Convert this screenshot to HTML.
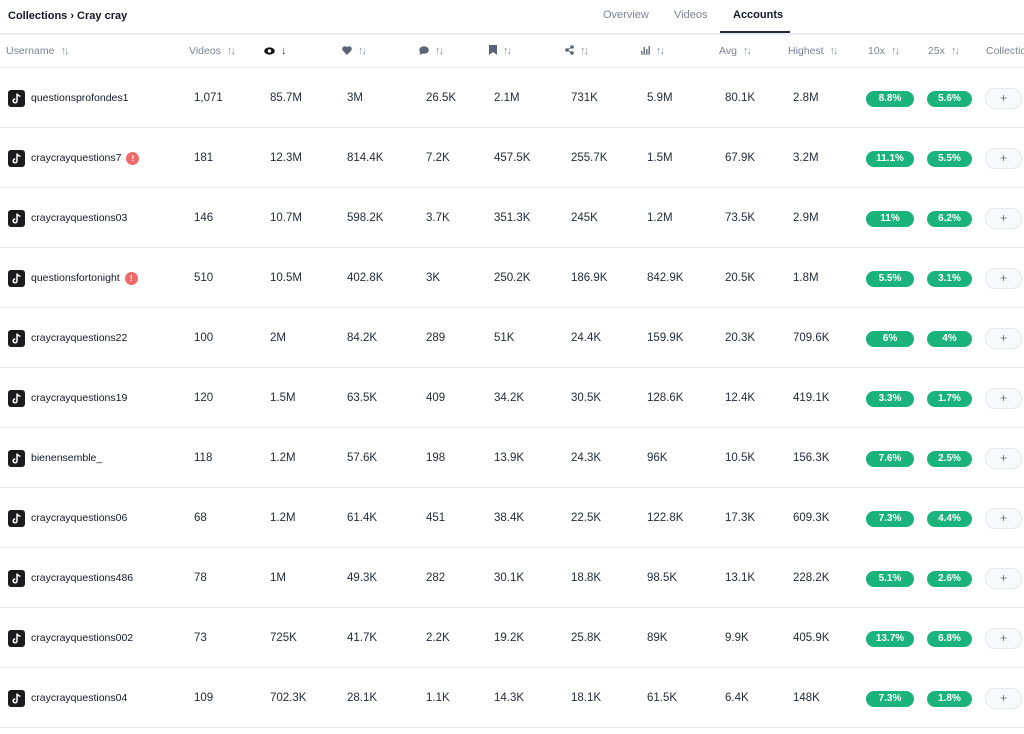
<!DOCTYPE html>
<html><head><meta charset="utf-8"><style>
*{margin:0;padding:0;box-sizing:border-box}
body{width:1024px;height:734px;overflow:hidden;background:#fff;font-family:"Liberation Sans",sans-serif;color:#1f2937;position:relative}
.top{position:absolute;left:0;top:0;width:1024px;height:35px;border-bottom:2px solid #e8edf3}
.bc{position:absolute;left:8px;top:10px;font-size:11px;font-weight:bold;color:#111827}
.tab{position:absolute;top:9px;font-size:11px;color:#7b8494}
.tab.a{color:#111827;font-weight:bold}
.ul{position:absolute;left:720px;top:31px;width:70px;height:2px;background:#1f2937}
.hdr{position:absolute;left:0;top:35px;width:1024px;height:33px;border-bottom:1px solid #e5e7eb}
.h{position:absolute;top:10px;font-size:10.5px;color:#7b8494;white-space:nowrap}
.s{font-size:11px;color:#8a94a4;margin-left:6px;letter-spacing:-2px}
.row{position:absolute;left:0;width:1024px;height:60px;border-bottom:1px solid #e5e7eb}
.c{position:absolute;top:1px;line-height:59px;font-size:11.5px;color:#1f2937;white-space:nowrap}
.u{left:8px;display:flex;align-items:center;height:59px;font-size:10.5px;color:#111827}
.tt{width:17px;height:17px;background:#1c1c1e;border-radius:3px;margin-right:6px;display:flex;align-items:center;justify-content:center}
.bang{display:inline-block;width:13px;height:13px;border-radius:50%;background:#ef6b6b;color:#fff;font-size:8px;text-align:center;line-height:13px;margin-left:5px;font-weight:bold}
.p{position:absolute;top:23px;height:16px;border-radius:8px;background:#19b37b;color:#fff;font-size:10px;text-align:center;line-height:16px;font-weight:bold}
.p1{left:866px;width:48px}.p2{left:927px;width:45px}
.pl{position:absolute;left:985px;top:20px;width:37px;height:21px;border:1px solid #e5e7eb;border-radius:10px;background:#f8fafc;color:#6b7280;font-size:12px;text-align:center;line-height:19px}
.v1{left:194px}.v2{left:270px}.v3{left:347px}.v4{left:426px}.v5{left:494px}.v6{left:571px}.v7{left:647px}.v8{left:725px}.v9{left:793px}
</style></head><body>
<div class="top">
<div class="bc">Collections › Cray cray</div>
<div class="tab" style="left:603px">Overview</div>
<div class="tab" style="left:674px">Videos</div>
<div class="tab a" style="left:733px">Accounts</div>
<div class="ul"></div>
</div>
<div class="hdr">
<div class="h" style="left:6px">Username<span class="s">↑↓</span></div>
<div class="h" style="left:189px">Videos<span class="s">↑↓</span></div>
<div class="h" style="left:264px"><svg width="11" height="8" viewBox="0 0 11 8" style="vertical-align:-1px"><ellipse cx="5.5" cy="4" rx="5.3" ry="3.6" fill="#111"/><circle cx="5.5" cy="4" r="1.7" fill="#fff"/></svg><span class="s" style="color:#333;margin-left:6px">↓</span></div>
<div class="h" style="left:342px"><svg width="10" height="9" viewBox="0 0 10 9" style="vertical-align:-1px"><path d="M5 9L.8 4.6A2.5 2.5 0 0 1 5 1.3 2.5 2.5 0 0 1 9.2 4.6Z" fill="#5b6475"/></svg><span class="s">↑↓</span></div>
<div class="h" style="left:419px"><svg width="10" height="9" viewBox="0 0 10 9" style="vertical-align:-1px"><ellipse cx="5" cy="4" rx="4.8" ry="3.8" fill="#5b6475"/><path d="M1.5 6L.5 9 4 7.5Z" fill="#5b6475"/></svg><span class="s">↑↓</span></div>
<div class="h" style="left:489px"><svg width="8" height="10" viewBox="0 0 8 10" style="vertical-align:-1px"><path d="M0 0H8V10L4 7 0 10Z" fill="#5b6475"/></svg><span class="s">↑↓</span></div>
<div class="h" style="left:565px"><svg width="9" height="10" viewBox="0 0 9 10" style="vertical-align:-1px"><circle cx="7" cy="2" r="1.8" fill="#5b6475"/><circle cx="2" cy="5" r="1.8" fill="#5b6475"/><circle cx="7" cy="8" r="1.8" fill="#5b6475"/><path d="M7 2L2 5 7 8" stroke="#5b6475" fill="none"/></svg><span class="s">↑↓</span></div>
<div class="h" style="left:641px"><svg width="9" height="10" viewBox="0 0 9 10" style="vertical-align:-1px"><path d="M0 9h1.5V6H0zM2.5 9H4V2H2.5zM5 9h1.5V4H5zM7.5 9H9V1H7.5zM0 9.5h9v.5H0z" fill="#6b7485"/></svg><span class="s">↑↓</span></div>
<div class="h" style="left:719px">Avg<span class="s">↑↓</span></div>
<div class="h" style="left:788px">Highest<span class="s">↑↓</span></div>
<div class="h" style="left:868px">10x<span class="s">↑↓</span></div>
<div class="h" style="left:928px">25x<span class="s">↑↓</span></div>
<div class="h" style="left:986px">Collections</div>
</div>

<div class="row" style="top:68px"><div class="c u"><span class="tt"><svg width="10" height="11" viewBox="0 0 10 11"><path d="M5 0.5V7.8A1.9 1.9 0 1 1 3.3 6" stroke="#fff" stroke-width="1.5" fill="none"/><path d="M5 0.8Q6 3 8.5 3.2" stroke="#fff" stroke-width="1.4" fill="none"/></svg></span>questionsprofondes1</div><div class="c v1">1,071</div><div class="c v2">85.7M</div><div class="c v3">3M</div><div class="c v4">26.5K</div><div class="c v5">2.1M</div><div class="c v6">731K</div><div class="c v7">5.9M</div><div class="c v8">80.1K</div><div class="c v9">2.8M</div><div class="p p1">8.8%</div><div class="p p2">5.6%</div><div class="pl">+</div></div>

<div class="row" style="top:128px"><div class="c u"><span class="tt"><svg width="10" height="11" viewBox="0 0 10 11"><path d="M5 0.5V7.8A1.9 1.9 0 1 1 3.3 6" stroke="#fff" stroke-width="1.5" fill="none"/><path d="M5 0.8Q6 3 8.5 3.2" stroke="#fff" stroke-width="1.4" fill="none"/></svg></span>craycrayquestions7<span class="bang">!</span></div><div class="c v1">181</div><div class="c v2">12.3M</div><div class="c v3">814.4K</div><div class="c v4">7.2K</div><div class="c v5">457.5K</div><div class="c v6">255.7K</div><div class="c v7">1.5M</div><div class="c v8">67.9K</div><div class="c v9">3.2M</div><div class="p p1">11.1%</div><div class="p p2">5.5%</div><div class="pl">+</div></div>

<div class="row" style="top:188px"><div class="c u"><span class="tt"><svg width="10" height="11" viewBox="0 0 10 11"><path d="M5 0.5V7.8A1.9 1.9 0 1 1 3.3 6" stroke="#fff" stroke-width="1.5" fill="none"/><path d="M5 0.8Q6 3 8.5 3.2" stroke="#fff" stroke-width="1.4" fill="none"/></svg></span>craycrayquestions03</div><div class="c v1">146</div><div class="c v2">10.7M</div><div class="c v3">598.2K</div><div class="c v4">3.7K</div><div class="c v5">351.3K</div><div class="c v6">245K</div><div class="c v7">1.2M</div><div class="c v8">73.5K</div><div class="c v9">2.9M</div><div class="p p1">11%</div><div class="p p2">6.2%</div><div class="pl">+</div></div>

<div class="row" style="top:248px"><div class="c u"><span class="tt"><svg width="10" height="11" viewBox="0 0 10 11"><path d="M5 0.5V7.8A1.9 1.9 0 1 1 3.3 6" stroke="#fff" stroke-width="1.5" fill="none"/><path d="M5 0.8Q6 3 8.5 3.2" stroke="#fff" stroke-width="1.4" fill="none"/></svg></span>questionsfortonight<span class="bang">!</span></div><div class="c v1">510</div><div class="c v2">10.5M</div><div class="c v3">402.8K</div><div class="c v4">3K</div><div class="c v5">250.2K</div><div class="c v6">186.9K</div><div class="c v7">842.9K</div><div class="c v8">20.5K</div><div class="c v9">1.8M</div><div class="p p1">5.5%</div><div class="p p2">3.1%</div><div class="pl">+</div></div>

<div class="row" style="top:308px"><div class="c u"><span class="tt"><svg width="10" height="11" viewBox="0 0 10 11"><path d="M5 0.5V7.8A1.9 1.9 0 1 1 3.3 6" stroke="#fff" stroke-width="1.5" fill="none"/><path d="M5 0.8Q6 3 8.5 3.2" stroke="#fff" stroke-width="1.4" fill="none"/></svg></span>craycrayquestions22</div><div class="c v1">100</div><div class="c v2">2M</div><div class="c v3">84.2K</div><div class="c v4">289</div><div class="c v5">51K</div><div class="c v6">24.4K</div><div class="c v7">159.9K</div><div class="c v8">20.3K</div><div class="c v9">709.6K</div><div class="p p1">6%</div><div class="p p2">4%</div><div class="pl">+</div></div>

<div class="row" style="top:368px"><div class="c u"><span class="tt"><svg width="10" height="11" viewBox="0 0 10 11"><path d="M5 0.5V7.8A1.9 1.9 0 1 1 3.3 6" stroke="#fff" stroke-width="1.5" fill="none"/><path d="M5 0.8Q6 3 8.5 3.2" stroke="#fff" stroke-width="1.4" fill="none"/></svg></span>craycrayquestions19</div><div class="c v1">120</div><div class="c v2">1.5M</div><div class="c v3">63.5K</div><div class="c v4">409</div><div class="c v5">34.2K</div><div class="c v6">30.5K</div><div class="c v7">128.6K</div><div class="c v8">12.4K</div><div class="c v9">419.1K</div><div class="p p1">3.3%</div><div class="p p2">1.7%</div><div class="pl">+</div></div>

<div class="row" style="top:428px"><div class="c u"><span class="tt"><svg width="10" height="11" viewBox="0 0 10 11"><path d="M5 0.5V7.8A1.9 1.9 0 1 1 3.3 6" stroke="#fff" stroke-width="1.5" fill="none"/><path d="M5 0.8Q6 3 8.5 3.2" stroke="#fff" stroke-width="1.4" fill="none"/></svg></span>bienensemble_</div><div class="c v1">118</div><div class="c v2">1.2M</div><div class="c v3">57.6K</div><div class="c v4">198</div><div class="c v5">13.9K</div><div class="c v6">24.3K</div><div class="c v7">96K</div><div class="c v8">10.5K</div><div class="c v9">156.3K</div><div class="p p1">7.6%</div><div class="p p2">2.5%</div><div class="pl">+</div></div>

<div class="row" style="top:488px"><div class="c u"><span class="tt"><svg width="10" height="11" viewBox="0 0 10 11"><path d="M5 0.5V7.8A1.9 1.9 0 1 1 3.3 6" stroke="#fff" stroke-width="1.5" fill="none"/><path d="M5 0.8Q6 3 8.5 3.2" stroke="#fff" stroke-width="1.4" fill="none"/></svg></span>craycrayquestions06</div><div class="c v1">68</div><div class="c v2">1.2M</div><div class="c v3">61.4K</div><div class="c v4">451</div><div class="c v5">38.4K</div><div class="c v6">22.5K</div><div class="c v7">122.8K</div><div class="c v8">17.3K</div><div class="c v9">609.3K</div><div class="p p1">7.3%</div><div class="p p2">4.4%</div><div class="pl">+</div></div>

<div class="row" style="top:548px"><div class="c u"><span class="tt"><svg width="10" height="11" viewBox="0 0 10 11"><path d="M5 0.5V7.8A1.9 1.9 0 1 1 3.3 6" stroke="#fff" stroke-width="1.5" fill="none"/><path d="M5 0.8Q6 3 8.5 3.2" stroke="#fff" stroke-width="1.4" fill="none"/></svg></span>craycrayquestions486</div><div class="c v1">78</div><div class="c v2">1M</div><div class="c v3">49.3K</div><div class="c v4">282</div><div class="c v5">30.1K</div><div class="c v6">18.8K</div><div class="c v7">98.5K</div><div class="c v8">13.1K</div><div class="c v9">228.2K</div><div class="p p1">5.1%</div><div class="p p2">2.6%</div><div class="pl">+</div></div>

<div class="row" style="top:608px"><div class="c u"><span class="tt"><svg width="10" height="11" viewBox="0 0 10 11"><path d="M5 0.5V7.8A1.9 1.9 0 1 1 3.3 6" stroke="#fff" stroke-width="1.5" fill="none"/><path d="M5 0.8Q6 3 8.5 3.2" stroke="#fff" stroke-width="1.4" fill="none"/></svg></span>craycrayquestions002</div><div class="c v1">73</div><div class="c v2">725K</div><div class="c v3">41.7K</div><div class="c v4">2.2K</div><div class="c v5">19.2K</div><div class="c v6">25.8K</div><div class="c v7">89K</div><div class="c v8">9.9K</div><div class="c v9">405.9K</div><div class="p p1">13.7%</div><div class="p p2">6.8%</div><div class="pl">+</div></div>

<div class="row" style="top:668px"><div class="c u"><span class="tt"><svg width="10" height="11" viewBox="0 0 10 11"><path d="M5 0.5V7.8A1.9 1.9 0 1 1 3.3 6" stroke="#fff" stroke-width="1.5" fill="none"/><path d="M5 0.8Q6 3 8.5 3.2" stroke="#fff" stroke-width="1.4" fill="none"/></svg></span>craycrayquestions04</div><div class="c v1">109</div><div class="c v2">702.3K</div><div class="c v3">28.1K</div><div class="c v4">1.1K</div><div class="c v5">14.3K</div><div class="c v6">18.1K</div><div class="c v7">61.5K</div><div class="c v8">6.4K</div><div class="c v9">148K</div><div class="p p1">7.3%</div><div class="p p2">1.8%</div><div class="pl">+</div></div>
</body></html>
